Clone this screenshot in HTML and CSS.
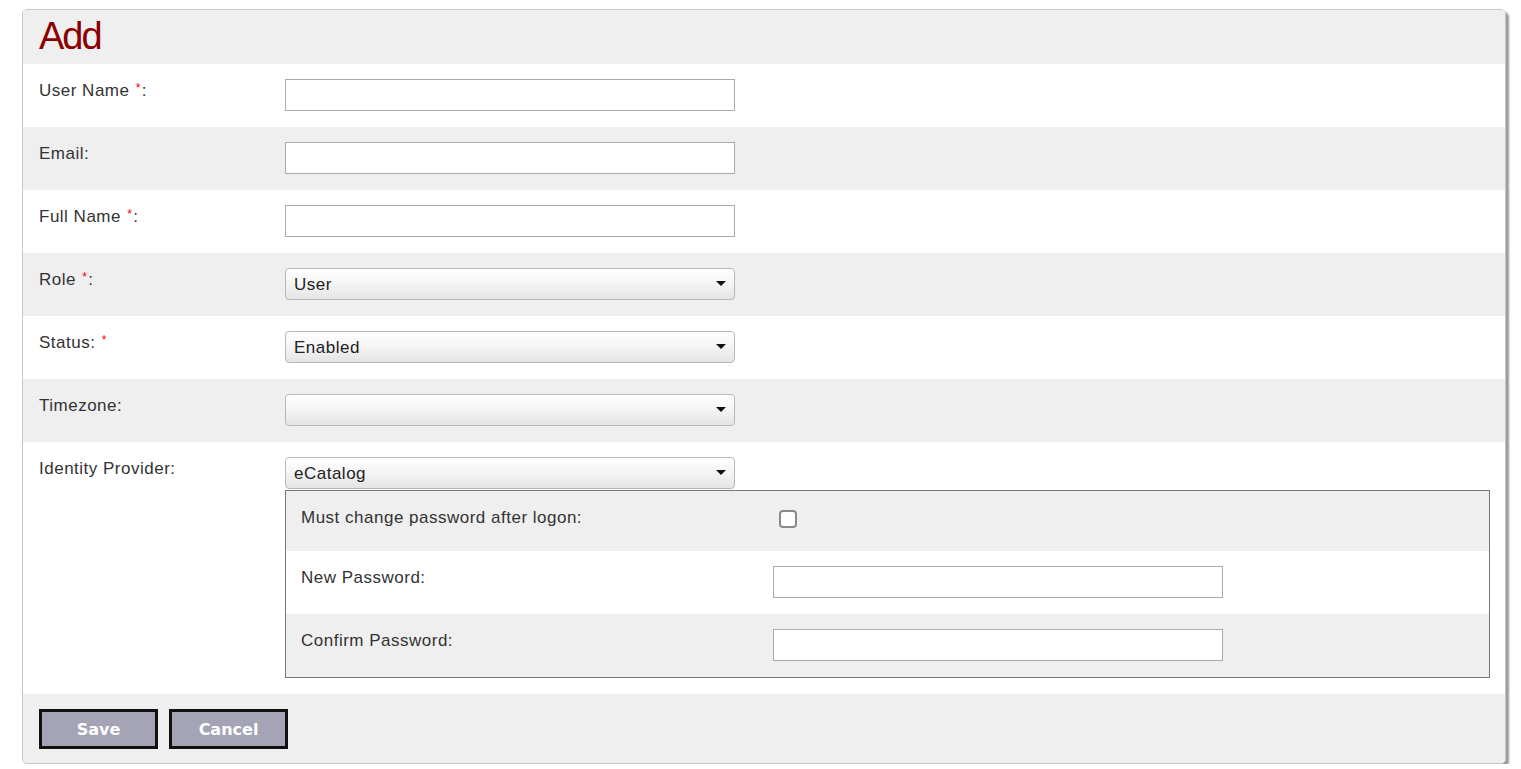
FILE: index.html
```html
<!DOCTYPE html>
<html>
<head>
<meta charset="utf-8">
<title>Add</title>
<link rel="stylesheet" href="styles.css">
</head>
<body>
<div class="page">
  <div class="panel">
    <div class="header"><h1 class="title">Add</h1></div>

    <div class="row">
      <div class="label">User Name <span class="req">*</span>:</div>
      <div class="field"><input class="text" type="text"></div>
    </div>
    <div class="row alt">
      <div class="label">Email:</div>
      <div class="field"><input class="text" type="text"></div>
    </div>
    <div class="row">
      <div class="label">Full Name <span class="req">*</span>:</div>
      <div class="field"><input class="text" type="text"></div>
    </div>
    <div class="row alt">
      <div class="label">Role <span class="req">*</span>:</div>
      <div class="field">
        <div class="select"><span class="select-text">User</span>
          <svg class="arrow" width="10" height="5" viewBox="0 0 10 5"><path d="M0 0H10L5 5Z" fill="#111"/></svg>
        </div>
      </div>
    </div>
    <div class="row">
      <div class="label">Status: <span class="req">*</span></div>
      <div class="field">
        <div class="select"><span class="select-text">Enabled</span>
          <svg class="arrow" width="10" height="5" viewBox="0 0 10 5"><path d="M0 0H10L5 5Z" fill="#111"/></svg>
        </div>
      </div>
    </div>
    <div class="row alt">
      <div class="label">Timezone:</div>
      <div class="field">
        <div class="select"><span class="select-text"></span>
          <svg class="arrow" width="10" height="5" viewBox="0 0 10 5"><path d="M0 0H10L5 5Z" fill="#111"/></svg>
        </div>
      </div>
    </div>
    <div class="row idp">
      <div class="label">Identity Provider:</div>
      <div class="field">
        <div class="select"><span class="select-text">eCatalog</span>
          <svg class="arrow" width="10" height="5" viewBox="0 0 10 5"><path d="M0 0H10L5 5Z" fill="#111"/></svg>
        </div>
        <div class="subpanel">
          <div class="subrow alt short">
            <div class="sublabel">Must change password after logon:</div>
            <div class="subfield"><span class="checkbox"></span></div>
          </div>
          <div class="subrow">
            <div class="sublabel">New Password:</div>
            <div class="subfield input-field"><input class="text" type="password"></div>
          </div>
          <div class="subrow alt">
            <div class="sublabel">Confirm Password:</div>
            <div class="subfield input-field"><input class="text" type="password"></div>
          </div>
        </div>
      </div>
    </div>

    <div class="footer">
      <button class="btn" type="button">Save</button>
      <button class="btn" type="button">Cancel</button>
    </div>
  </div>
</div>
</body>
</html>
```

FILE: styles.css
```css
html, body {
  margin: 0;
  padding: 0;
  background: #fff;
}

body {
  font-family: "Liberation Sans", Arial, sans-serif;
  font-size: 17px;
  line-height: 19px;
  letter-spacing: 0.5px;
  color: #333;
}

.page {
  padding: 9px 0 0 22px;
}

.panel {
  width: 1484px;
  box-sizing: border-box;
  border: 1px solid #c8c8c8;
  border-radius: 5px;
  box-shadow: 3px 3px 2px #9c9c9c;
  background: #fff;
  overflow: hidden;
}

.header {
  height: 54px;
  background: #efefef;
  padding-left: 16px;
}

.title {
  margin: 0;
  font-weight: normal;
  font-size: 38px;
  line-height: 52px;
  letter-spacing: -2px;
  color: #8b0000;
}

.row {
  display: flex;
  height: 63px;
  box-sizing: border-box;
  background: #fff;
}

.row.alt,
.subrow.alt {
  background: #efefef;
}

.row.idp {
  height: auto;
  padding-bottom: 16px;
}

.label {
  width: 262px;
  box-sizing: border-box;
  padding: 17px 0 0 16px;
  flex: none;
}

.req {
  color: #e00;
  font-size: 12px;
  vertical-align: top;
  position: relative;
  top: -2px;
  padding: 0 1px;
}

.field {
  padding-top: 15px;
}

.text {
  display: block;
  width: 450px;
  height: 32px;
  box-sizing: border-box;
  margin: 0;
  padding: 0 8px;
  border: 1px solid #aaa;
  background: #fff;
  font: inherit;
  outline: none;
}

.select {
  position: relative;
  width: 450px;
  height: 32px;
  box-sizing: border-box;
  border: 1px solid #b8b8b8;
  border-radius: 4px;
  background: linear-gradient(to bottom, #ffffff 0%, #f4f4f4 50%, #e4e4e4 100%);
  padding: 0 8px;
  display: flex;
  align-items: center;
  color: #222;
}

.arrow {
  position: absolute;
  right: 8px;
  top: 12px;
}

.subpanel {
  width: 1205px;
  box-sizing: border-box;
  margin-top: 1px;
  border: 1px solid #777;
  background: #fff;
}

.subrow {
  display: flex;
  height: 63px;
  box-sizing: border-box;
}

.subrow.short {
  height: 60px;
}

.sublabel {
  width: 487px;
  box-sizing: border-box;
  padding: 17px 0 0 15px;
  flex: none;
}

.subfield {
  padding: 19px 0 0 6px;
}

.subfield.input-field {
  padding: 15px 0 0 0;
}

.checkbox {
  display: block;
  width: 18px;
  height: 18px;
  box-sizing: border-box;
  border: 2px solid #8a8a8a;
  border-radius: 4px;
  background: #fff;
}

.footer {
  display: flex;
  gap: 11px;
  height: 69px;
  box-sizing: border-box;
  padding: 15px 16px 0;
  background: #efefef;
}

.btn {
  width: 119px;
  height: 40px;
  box-sizing: border-box;
  margin: 0;
  padding: 1px 0 0;
  border: 3px solid #111;
  background: #a4a4b6;
  color: #fff;
  font-family: "DejaVu Sans", Verdana, sans-serif;
  font-weight: bold;
  font-size: 16px;
  letter-spacing: 0;
  cursor: pointer;
}
```
